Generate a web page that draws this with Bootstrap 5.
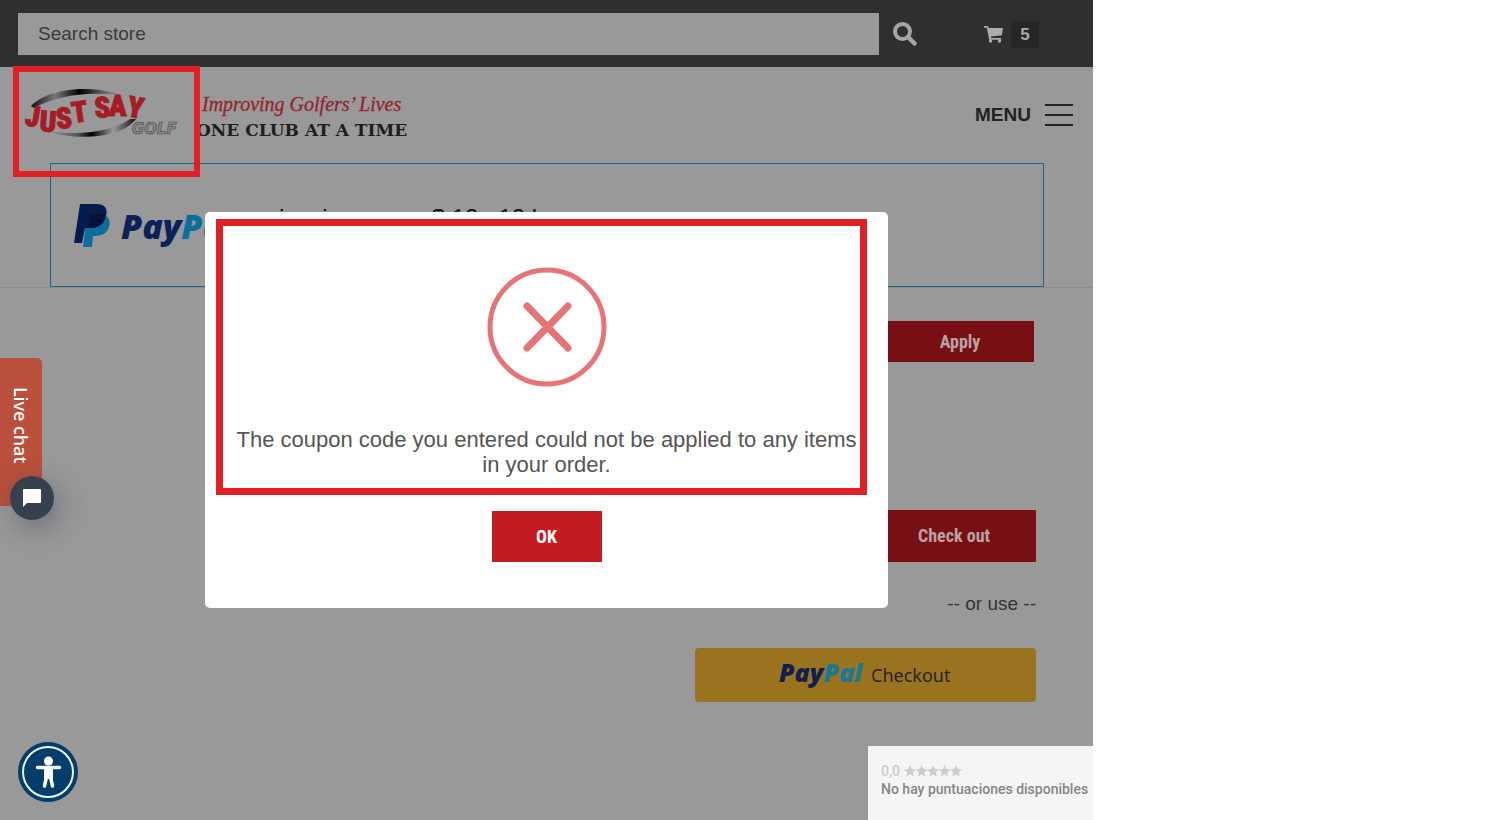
<!DOCTYPE html>
<html lang="en">
<head>
<meta charset="utf-8">
<meta name="viewport" content="width=device-width, initial-scale=1">
<title>Just Say Golf - Shopping cart</title>
<link href="https://cdn.jsdelivr.net/npm/bootstrap@5.3.0/dist/css/bootstrap.min.css" rel="stylesheet">
<style>
  body { font-family: "Liberation Sans", Arial, sans-serif; background: #fff; color: #333; }
  .page-grid { display: grid; grid-template-columns: 1093fr 407fr; min-height: 100vh; }
  .store { background: #999; overflow: hidden; }
  .topbar { background: #2f2f2f; padding: 13px 54px 12px 18px; }
  .topbar .form-control { height: 42px; border: 0; border-radius: 0; background: #999; color: #333; font-size: 19px; padding: 0 20px; }
  .topbar .form-control::placeholder { color: #3a3a3a; opacity: 1; }
  .icon-btn { border: 0; background: none; padding: 0; line-height: 0; }
  .search-btn { margin-left: 14px; }
  .cart-link { color: #b0aaac; text-decoration: none; margin-left: 67px; }
  .cart-count { background: #262626; width: 28px; line-height: 27px; font-size: 17px; font-weight: 700; text-align: center; color: #aaa; }
  .brandbar { height: 96px; padding: 0 20px 0 18px; }
  .menu-btn { font-size: 19px; font-weight: 700; color: #222; gap: 14px; }
  .offer { margin: 0 49px 0 50px; border: 1px solid #20637f; height: 124px; padding: 0 22px; }
  .offer-text { color: #111; font-size: 24px; line-height: 28px; margin: 40px 0 0 36px; }
  .offer-gap-s { margin-right: 38px; }
  .offer-gap-l { margin-right: 104px; }
  .store-rule { border-top: 1px solid #8c8c8c; }
  .order { padding: 33px 57px 0 50px; }
  .btn-store { background: #770f14; color: #b9a3a4; border-radius: 0; border: 0; font: 700 18px/24px "Roboto Condensed", "Liberation Sans Narrow", sans-serif; }
  .apply-btn { width: 148px; height: 41px; margin: 0 2px 148px 0; }
  .checkout-btn { width: 164px; height: 52px; }
  .or-use { font-size: 19px; line-height: 24px; margin: 30px 0 32px; }
  .btn-paypal { width: 341px; height: 54px; background: #99731f; border: 0; border-radius: 4px; padding: 0; }
  .veil { inset: 0; }
  .alert-box { width: 62.5%; height: 396px; background: #fff; border-radius: 5px; padding: 54px 30px 46px; }
  .alert-msg { font-size: 22px; line-height: 25px; color: #555; margin: 39px 0 34px; }
  .ok-btn { width: 110px; height: 51px; background: #c41a22; color: #fff; }
  .ok-btn:hover { background: #a8151c; color: #fff; }
  .outline-mark { border: 7px solid #e01f27; pointer-events: none; }
  .mark-alert { top: 7px; left: 11px; right: 21px; height: 276px; }
  .mark-logo { top: 66px; left: 13px; width: 187px; height: 111px; border-width: 6px; }
  .chat-tab { left: 0; top: 358px; width: 42px; height: 148px; background: #b94f3c; color: #fff; border: 0; border-radius: 0 5px 5px 0; writing-mode: vertical-rl; font: 500 18px/42px "Noto Sans", sans-serif; padding: 0 0 13px; }
  .chat-round { left: 10px; top: 476px; width: 44px; height: 44px; border: 0; border-radius: 50%; background: #36414e; box-shadow: 4px 8px 28px rgba(50,60,75,.45); padding: 0; line-height: 0; }
  .access { left: 18px; bottom: 18px; }
  .rating { right: 0; bottom: 0; width: 225px; height: 74px; background: #f5f5f5; padding: 16px 0 0 13px; font: 500 14px/19px Roboto, sans-serif; color: #858585; white-space: nowrap; }
  .score { color: #ccc; line-height: 18px; }
</style>
</head>
<body>
<div class="page-grid">
  <div class="store position-relative">
    <header>
      <form class="topbar d-flex align-items-center">
        <input class="form-control" type="search" placeholder="Search store" aria-label="Search store">
        <button class="icon-btn search-btn" type="button" aria-label="Search">
          <svg width="24" height="24" viewBox="0 0 24 24" fill="none" stroke="#a9a5a6"><circle cx="9.500" cy="9.500" r="7.500" stroke-width="4"/><path d="M15 15l6.500 6.500" stroke-width="4.500" stroke-linecap="round"/></svg>
        </button>
        <a class="cart-link d-flex align-items-center gap-2" href="#" aria-label="Cart, 5 items">
          <svg width="19" height="17" viewBox="0 0 19 17" fill="currentColor"><path d="M0 0h4l.6 2H19l-1.200 7.200-11 1.300.3 1.500H17v1.700H5.200L2.800 1.700H0z"/><circle cx="6.500" cy="15" r="1.700"/><circle cx="15.500" cy="15" r="1.700"/></svg>
          <span class="cart-count">5</span>
        </a>
      </form>
      <div class="brandbar d-flex align-items-center justify-content-between">
        <a href="#" aria-label="Just Say Golf">
          <svg width="400" height="70" viewBox="18 80 400 70">
            <defs>
              <linearGradient id="ringTop"><stop offset="0" stop-color="#111"/><stop offset=".25" stop-color="#777"/><stop offset=".5" stop-color="#000"/><stop offset=".8" stop-color="#777"/><stop offset="1" stop-color="#999"/></linearGradient>
              <linearGradient id="ringLow"><stop offset="0" stop-color="#999"/><stop offset=".35" stop-color="#555"/><stop offset=".5" stop-color="#000"/><stop offset=".75" stop-color="#999"/><stop offset="1" stop-color="#111"/></linearGradient>
            </defs>
            <path d="M31 106C48 88 92 83 128 97C96 90 58 94 34 108z" fill="url(#ringTop)"/>
            <path d="M46 131C75 141 121 139 136 119L130 119C112 132 79 136 46 131z" fill="url(#ringLow)"/>
            <g font-family="'Roboto Condensed','Liberation Sans Narrow',sans-serif" font-weight="900" font-size="29" fill="#a51c27" stroke="#a51c27">
              <text x="24 39 57 73" y="125 131 129 123" rotate="10 4 -6 -8">JUST</text>
              <text x="95 109 126" y="118 116 116" rotate="-4 0 10">SAY</text>
            </g>
            <text x="132" y="134" font-family="'DejaVu Sans',sans-serif" font-weight="700" font-style="italic" font-size="15" fill="#858585" stroke="#484848" stroke-width=".6">GOLF</text>
            <text x="202" y="111" font-family="'Liberation Serif',serif" font-style="italic" font-size="20" fill="#96242f" stroke="#96242f" stroke-width=".3">Improving Golfers’ Lives</text>
            <text x="196" y="136" font-family="'DejaVu Serif',serif" font-weight="700" font-size="17" fill="#1d1d1d">ONE CLUB AT A TIME</text>
          </svg>
        </a>
        <button class="icon-btn menu-btn d-flex align-items-center" type="button">MENU
          <svg width="28" height="24" viewBox="0 0 28 24" stroke="#222" stroke-width="2"><path d="M0 2h28M0 12h28M0 22h28"/></svg>
        </button>
      </div>
    </header>

    <section class="offer d-flex align-items-center">
      <svg width="170" height="50" viewBox="72 200 170 50" role="img" aria-label="PayPal">
        <path d="M86 213h15c6 3 9 7 7 14-2 7-8 9-16 9l-1 11H82z" fill="#0b6e9c"/>
        <path d="M79 204h17c8 0 11 5 9 12-2 9-8 12-17 12h-4l-3 15h-8z" fill="#061c4c"/>
        <path d="M89 214h15c1 6-5 14-15 14h-3z" fill="#04113b"/>
        <text x="120" y="239" font-family="'Open Sans',sans-serif" font-size="34" font-weight="800" font-style="italic" fill="#0c2158">Pay<tspan fill="#0b6e9c">Pal</tspan></text>
      </svg>
      <div class="offer-text d-flex align-self-start" aria-hidden="true">
        <span class="offer-gap-s">i</span><span class="offer-gap-l">i</span><span>$ 12&nbsp;&nbsp; 12 l</span>
      </div>
    </section>
    <div class="store-rule"></div>

    <main class="order d-flex flex-column align-items-end">
      <button class="btn btn-store apply-btn" type="button">Apply</button>
      <button class="btn btn-store checkout-btn" type="button">Check out</button>
      <p class="or-use">-- or use --</p>
      <button class="btn-paypal" type="button" aria-label="PayPal Checkout">
        <svg width="180" height="34" viewBox="0 0 180 34">
          <text x="3" y="24" font-family="'Open Sans',sans-serif" font-size="25" font-weight="800" font-style="italic" fill="#101f4d">Pay<tspan fill="#187996">Pal</tspan></text>
          <text x="95" y="24" font-family="'Noto Sans',sans-serif" font-size="18" fill="#2b2415">Checkout</text>
        </svg>
      </button>
    </main>

    <div class="veil position-absolute d-flex align-items-center justify-content-center">
      <div class="alert-box position-relative text-center" role="alertdialog" aria-labelledby="alertMsg">
        <svg width="122" height="122" viewBox="0 0 122 122" fill="none" stroke="#e67477"><circle cx="61" cy="61" r="57" stroke-width="5"/><path d="M41 40l41 42M82 40L41 82" stroke-width="7" stroke-linecap="round"/></svg>
        <p class="alert-msg" id="alertMsg">The coupon code you entered could not be applied to any items in your order.</p>
        <button class="btn btn-store ok-btn" type="button">OK</button>
        <div class="outline-mark mark-alert position-absolute"></div>
      </div>
    </div>

    <div class="outline-mark mark-logo position-absolute"></div>
    <button class="chat-tab position-absolute" type="button">Live chat</button>
    <button class="chat-round position-absolute" type="button" aria-label="Open chat">
      <svg width="18" height="18" viewBox="0 0 18 18" fill="#fff"><path d="M1 0h16q1 0 1 1v12q0 1-1 1H4l-4 4V1q0-1 1-1z"/></svg>
    </button>
    <button class="icon-btn access position-absolute" type="button" aria-label="Accessibility">
      <svg width="60" height="60" viewBox="0 0 60 60"><circle cx="30" cy="30" r="30" fill="#063e6b"/><circle cx="30" cy="30" r="25" fill="none" stroke="#e6f5fb" stroke-width="2"/><circle cx="30.500" cy="19" r="4.500" fill="#fff"/><path d="M19.500 25.500H41.500M30.500 27v8M28.500 35L26.500 44M32.500 35L34.500 44" fill="none" stroke="#fff" stroke-width="3.500" stroke-linecap="round"/><path d="M26 25h9v12h-9z" fill="#fff"/></svg>
    </button>
    <aside class="rating position-absolute">
      <div class="score d-flex align-items-center">0,0<svg class="ms-1" width="58" height="12" viewBox="0 0 58 12" fill="#ccc"><defs><path id="star" d="M6 0l1.700 4.100 4.300.3-3.300 2.800 1 4.300L6 9.200l-3.700 2.300 1-4.300L0 4.400l4.300-.3z"/></defs><use href="#star"/><use href="#star" x="11.500"/><use href="#star" x="23"/><use href="#star" x="34.500"/><use href="#star" x="46"/></svg></div>
      <div>No hay puntuaciones disponibles</div>
    </aside>
  </div>
</div>
<script src="https://cdn.jsdelivr.net/npm/bootstrap@5.3.0/dist/js/bootstrap.bundle.min.js"></script>
</body>
</html>
